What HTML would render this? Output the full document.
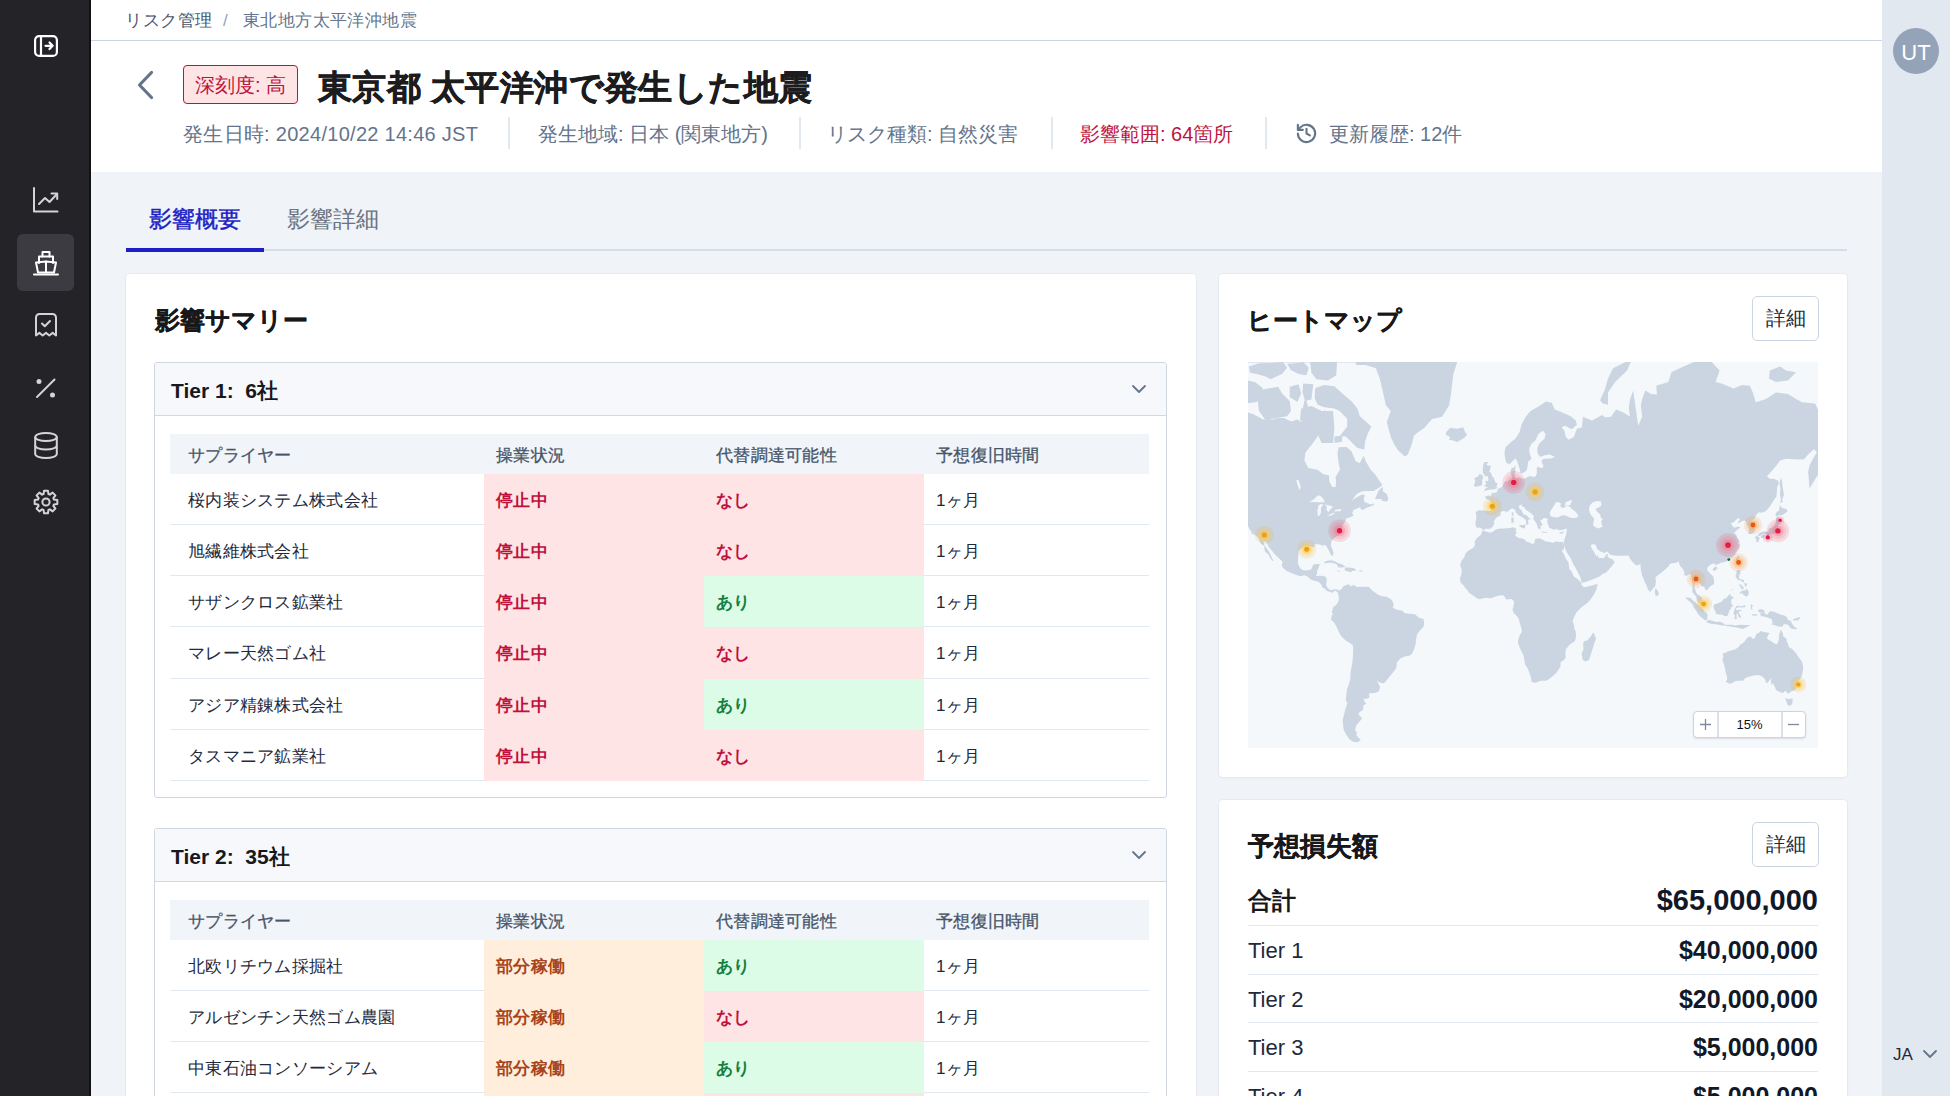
<!DOCTYPE html>
<html>
<head>
<meta charset="utf-8">
<title>リスク管理</title>
<style>
*{box-sizing:border-box;margin:0;padding:0}
html,body{width:1950px;height:1096px;overflow:hidden}
body{position:relative;background:#f0f3f8;font-family:"Liberation Sans",sans-serif;color:#1e293b}
.a{position:absolute;white-space:nowrap}
.b{-webkit-text-stroke:0.3px currentColor}
#side{left:0;top:0;width:91px;height:1096px;background:#242428;border-right:2px solid #121214}
#side svg{position:absolute;overflow:visible}
#hdr{left:91px;top:0;width:1791px;height:172px;background:#fff}
#bcline{left:91px;top:40px;width:1791px;height:1px;background:#cbd5e1}
#rail{left:1882px;top:0;width:68px;height:1096px;background:#e2e8f0}
.card{position:absolute;background:#fff;border-radius:4px;box-shadow:0 0 0 1px #e6ebf1,0 1px 3px rgba(15,23,42,.06)}
.tier{position:absolute;border:1.5px solid #cfd6df;border-radius:3px;background:#fff;overflow:hidden}
.th{position:absolute;left:0;top:0;right:0;background:#f6f8fc;border-bottom:1.8px solid #d2d8e0}
.tbl{position:absolute;left:15px}
.row{position:absolute;left:0;width:979px;height:51.3px}
.hrow{background:#f1f5f9;height:40px}
.c{position:absolute;top:0;height:100%;font-size:17px;letter-spacing:0.3px;line-height:54px}
.hrow .c{line-height:43px;color:#475569;-webkit-text-stroke:0.3px #475569}
.c1{left:0;width:314px;padding-left:18px;color:#1e293b;border-bottom:1px solid #e2e8f0}
.c2{left:314px;width:220px;padding-left:12px;font-weight:bold}
.c3{left:534px;width:220px;padding-left:12px;font-weight:bold}
.c4{left:754px;width:225px;padding-left:12px;color:#1e293b;border-bottom:1px solid #e2e8f0}
.hrow .c1,.hrow .c4{border-bottom:0}
.red{background:#ffe4e6;color:#be123c}
.grn{background:#dcfce7;color:#15803d}
.org{background:#ffeedb;color:#a8431a}
.btn{position:absolute;border:1.5px solid #cbd5e1;border-radius:5px;background:#fff;font-size:20px;line-height:42px;text-align:center;color:#1e293b}
.lrow{position:absolute;left:29px;width:570px;border-bottom:1.5px solid #e2e8f0}
.lrow .l{position:absolute;left:0;font-size:22px}
.lrow .r{position:absolute;right:0;font-size:25px;font-weight:bold;color:#111827}
</style>
</head>
<body>
<div id="side" class="a">
  <!-- panel toggle -->
  <svg style="left:34px;top:35px" width="24" height="22" viewBox="0 0 24 22" fill="none" stroke="#fff" stroke-width="2.2" stroke-linecap="round" stroke-linejoin="round">
    <rect x="1.1" y="1.1" width="21.8" height="19.8" rx="4"/><line x1="7" y1="1.5" x2="7" y2="20.5"/><path d="M11.5 10.8h7M15.5 7.5l3.2 3.3-3.2 3.3"/>
  </svg>
  <!-- chart -->
  <svg style="left:33px;top:187px" width="26" height="26" viewBox="0 0 26 26" fill="none" stroke="#d4d4d8" stroke-width="2" stroke-linecap="round" stroke-linejoin="round">
    <path d="M1 1v23.5h23.5"/><path d="M6 17l6-6 4.5 4L24 7"/><path d="M18.5 6.5H24.2v5.5"/>
  </svg>
  <div class="a" style="left:17px;top:234px;width:57px;height:57px;border-radius:6px;background:#3b3b41"></div>
  <!-- ship -->
  <svg style="left:33px;top:250px" width="26" height="26" viewBox="0 0 26 26" fill="none" stroke="#fff" stroke-width="2" stroke-linecap="round" stroke-linejoin="round">
    <path d="M9.5 6.5V2h7v4.5"/><path d="M6 13V6.5h14V13"/><path d="M3 12.5l10-1 10 1-2 10H5z"/><path d="M13 11.5v11"/><path d="M1 24.5h24"/>
  </svg>
  <!-- receipt check -->
  <svg style="left:35px;top:313px" width="22" height="25" viewBox="0 0 22 25" fill="none" stroke="#d4d4d8" stroke-width="2" stroke-linecap="round" stroke-linejoin="round">
    <path d="M1 22.5V4.5a3.5 3.5 0 0 1 3.5-3.5h13a3.5 3.5 0 0 1 3.5 3.5V22.5l-3.33-2.6-3.33 2.6-3.33-2.6-3.33 2.6-3.33-2.6-3.35 2.6z"/><path d="M7 10.5l2.8 2.8 5.2-5.3"/>
  </svg>
  <!-- percent -->
  <svg style="left:35px;top:377px" width="22" height="22" viewBox="0 0 22 22" fill="none" stroke="#d4d4d8" stroke-width="2" stroke-linecap="round">
    <path d="M2 20L19.5 2.5"/><circle cx="4" cy="4.5" r="1.5" fill="#d4d4d8"/><circle cx="17.5" cy="18" r="1.5" fill="#d4d4d8"/>
  </svg>
  <!-- database -->
  <svg style="left:34px;top:432px" width="24" height="27" viewBox="0 0 24 27" fill="none" stroke="#d4d4d8" stroke-width="2">
    <ellipse cx="12" cy="5" rx="10.8" ry="4"/><path d="M1.2 5v17c0 2.2 4.8 4 10.8 4s10.8-1.8 10.8-4V5"/><path d="M1.2 13.5c0 2.2 4.8 4 10.8 4s10.8-1.8 10.8-4"/>
  </svg>
  <!-- gear -->
  <svg style="left:31.5px;top:488px" width="28" height="28" viewBox="0 0 28 28" fill="none" stroke="#d4d4d8" stroke-width="2" stroke-linejoin="round">
    <path d="M21.93 11.55 L25.33 12.05 L25.33 15.95 L21.93 16.45 L21.34 17.87 L23.39 20.64 L20.64 23.39 L17.87 21.34 L16.45 21.93 L15.95 25.33 L12.05 25.33 L11.55 21.93 L10.13 21.34 L7.36 23.39 L4.61 20.64 L6.66 17.87 L6.07 16.45 L2.67 15.95 L2.67 12.05 L6.07 11.55 L6.66 10.13 L4.61 7.36 L7.36 4.61 L10.13 6.66 L11.55 6.07 L12.05 2.67 L15.95 2.67 L16.45 6.07 L17.87 6.66 L20.64 4.61 L23.39 7.36 L21.34 10.13Z"/><circle cx="14" cy="14" r="3.6"/>
  </svg>
</div>

<div id="hdr" class="a"></div>
<div id="bcline" class="a"></div>
<div class="a" style="left:125px;top:8px;font-size:17px;letter-spacing:0.6px;line-height:26px;color:#475569">リスク管理</div>
<div class="a" style="left:223px;top:8px;font-size:17px;line-height:26px;color:#94a3b8">/</div>
<div class="a" style="left:243px;top:8px;font-size:17px;letter-spacing:0.4px;line-height:26px;color:#64748b">東北地方太平洋沖地震</div>

<!-- back chevron -->
<svg class="a" style="left:136px;top:70px" width="20" height="30" viewBox="0 0 20 30" fill="none" stroke="#64748b" stroke-width="3.2" stroke-linecap="round" stroke-linejoin="round"><path d="M15.5 2.5L3.5 15l12 12.5"/></svg>
<div class="a" style="left:183px;top:65px;width:115px;height:39px;border:1.7px solid #b4163f;border-radius:4px;background:#ffe4e6;color:#be123c;font-size:20px;line-height:39px;text-align:center">深刻度: 高</div>
<div class="a" style="left:318px;top:63px;font-size:34px;line-height:48px;letter-spacing:0.4px;font-weight:bold;color:#1c1c1f;-webkit-text-stroke:0.6px #1c1c1f">東京都 太平洋沖で発生した地震</div>

<div class="a" style="left:183px;top:120px;font-size:20px;line-height:28px;letter-spacing:0.28px;color:#64748b">発生日時: 2024/10/22 14:46 JST</div>
<div class="a" style="left:508px;top:117px;width:2px;height:32px;background:#e2e8f0"></div>
<div class="a" style="left:538px;top:120px;font-size:20px;line-height:28px;color:#64748b">発生地域: 日本 (関東地方)</div>
<div class="a" style="left:799px;top:117px;width:2px;height:32px;background:#e2e8f0"></div>
<div class="a" style="left:827px;top:120px;font-size:20px;line-height:28px;color:#64748b">リスク種類: 自然災害</div>
<div class="a" style="left:1051px;top:117px;width:2px;height:32px;background:#e2e8f0"></div>
<div class="a" style="left:1080px;top:120px;font-size:20px;line-height:28px;color:#be123c">影響範囲: 64箇所</div>
<div class="a" style="left:1265px;top:117px;width:2px;height:32px;background:#e2e8f0"></div>
<svg class="a" style="left:1295px;top:122px" width="23" height="23" viewBox="0 0 24 24" fill="none" stroke="#64748b" stroke-width="2.2" stroke-linecap="round" stroke-linejoin="round"><path d="M3 12a9 9 0 1 0 2.6-6.4L3 8.2"/><path d="M3 3v5.2h5.2"/><path d="M12 7v5l3.5 2"/></svg>
<div class="a" style="left:1329px;top:120px;font-size:20px;line-height:28px;color:#64748b">更新履歴: 12件</div>

<div id="rail" class="a"></div>
<div class="a" style="left:1893px;top:28px;width:46px;height:46px;border-radius:50%;background:#94a3b8;color:#fff;font-size:22px;line-height:49px;text-align:center">UT</div>
<div class="a" style="left:1893px;top:1043px;font-size:17px;line-height:24px;color:#1e293b">JA</div>
<svg class="a" style="left:1922px;top:1049px" width="16" height="10" viewBox="0 0 16 10" fill="none" stroke="#64748b" stroke-width="1.8" stroke-linecap="round" stroke-linejoin="round"><path d="M2 2l6 6 6-6"/></svg>

<!-- tabs -->
<div class="a" style="left:149px;top:203px;font-size:23px;line-height:32px;color:#1d1fc4;-webkit-text-stroke:0.45px #1d1fc4">影響概要</div>
<div class="a" style="left:287px;top:203px;font-size:23px;line-height:32px;color:#6b7280">影響詳細</div>
<div class="a" style="left:126px;top:249px;width:1721px;height:2px;background:#d6dde6"></div>
<div class="a" style="left:126px;top:248px;width:138px;height:3.5px;background:#1b1fc8"></div>

<!-- left card -->
<div class="card" style="left:126px;top:274px;width:1070px;height:900px">
  <div class="a b" style="left:29px;top:27px;font-size:25px;line-height:38px;font-weight:bold;color:#18181b">影響サマリー</div>

  <div class="tier" style="left:28px;top:88px;width:1013px;height:436px">
    <div class="th" style="height:53px"></div>
    <div class="a" style="left:16px;top:13px;font-size:21px;line-height:30px;font-weight:bold;color:#18181b">Tier 1:&nbsp; 6社</div>
    <svg class="a" style="left:976px;top:21px" width="16" height="10" viewBox="0 0 16 10" fill="none" stroke="#64748b" stroke-width="1.8" stroke-linecap="round" stroke-linejoin="round"><path d="M2 2l6 6 6-6"/></svg>
    <div class="tbl" style="top:70.5px">
      <div class="row hrow" style="top:0"><div class="c c1">サプライヤー</div><div class="c c2" style="font-weight:normal">操業状況</div><div class="c c3" style="font-weight:normal">代替調達可能性</div><div class="c c4">予想復旧時間</div></div>
      <div class="row" style="top:40px"><div class="c c1">桜内装システム株式会社</div><div class="c c2 red">停止中</div><div class="c c3 red">なし</div><div class="c c4">1ヶ月</div></div>
      <div class="row" style="top:91.3px"><div class="c c1">旭繊維株式会社</div><div class="c c2 red">停止中</div><div class="c c3 red">なし</div><div class="c c4">1ヶ月</div></div>
      <div class="row" style="top:142.6px"><div class="c c1">サザンクロス鉱業社</div><div class="c c2 red">停止中</div><div class="c c3 grn">あり</div><div class="c c4">1ヶ月</div></div>
      <div class="row" style="top:193.9px"><div class="c c1">マレー天然ゴム社</div><div class="c c2 red">停止中</div><div class="c c3 red">なし</div><div class="c c4">1ヶ月</div></div>
      <div class="row" style="top:245.2px"><div class="c c1">アジア精錬株式会社</div><div class="c c2 red">停止中</div><div class="c c3 grn">あり</div><div class="c c4">1ヶ月</div></div>
      <div class="row" style="top:296.5px"><div class="c c1">タスマニア鉱業社</div><div class="c c2 red">停止中</div><div class="c c3 red">なし</div><div class="c c4">1ヶ月</div></div>
    </div>
  </div>

  <div class="tier" style="left:28px;top:554px;width:1013px;height:500px">
    <div class="th" style="height:53px"></div>
    <div class="a" style="left:16px;top:13px;font-size:21px;line-height:30px;font-weight:bold;color:#18181b">Tier 2:&nbsp; 35社</div>
    <svg class="a" style="left:976px;top:21px" width="16" height="10" viewBox="0 0 16 10" fill="none" stroke="#64748b" stroke-width="1.8" stroke-linecap="round" stroke-linejoin="round"><path d="M2 2l6 6 6-6"/></svg>
    <div class="tbl" style="top:70.5px">
      <div class="row hrow" style="top:0"><div class="c c1">サプライヤー</div><div class="c c2" style="font-weight:normal">操業状況</div><div class="c c3" style="font-weight:normal">代替調達可能性</div><div class="c c4">予想復旧時間</div></div>
      <div class="row" style="top:40px"><div class="c c1">北欧リチウム採掘社</div><div class="c c2 org">部分稼働</div><div class="c c3 grn">あり</div><div class="c c4">1ヶ月</div></div>
      <div class="row" style="top:91.3px"><div class="c c1">アルゼンチン天然ゴム農園</div><div class="c c2 org">部分稼働</div><div class="c c3 red">なし</div><div class="c c4">1ヶ月</div></div>
      <div class="row" style="top:142.6px"><div class="c c1">中東石油コンソーシアム</div><div class="c c2 org">部分稼働</div><div class="c c3 grn">あり</div><div class="c c4">1ヶ月</div></div>
      <div class="row" style="top:193.9px"><div class="c c1">&nbsp;</div><div class="c c2 org"></div><div class="c c3 red"></div><div class="c c4"></div></div>
    </div>
  </div>
</div>

<!-- heatmap card -->
<div class="card" style="left:1219px;top:274px;width:628px;height:503px">
  <div class="a b" style="left:28px;top:27px;font-size:25px;line-height:38px;font-weight:bold;color:#18181b">ヒートマップ</div>
  <div class="btn" style="left:533px;top:22px;width:67px;height:45px">詳細</div>
</div>
<svg class="a" style="left:1248px;top:362px" width="570" height="386" viewBox="0 0 570 386">
  <defs>
    <radialGradient id="gr"><stop offset="0" stop-color="#f43f5e" stop-opacity=".55"/><stop offset=".35" stop-color="#fb7185" stop-opacity=".35"/><stop offset=".7" stop-color="#fda4af" stop-opacity=".25"/><stop offset="1" stop-color="#fda4af" stop-opacity="0"/></radialGradient>
    <radialGradient id="go"><stop offset="0" stop-color="#f97316" stop-opacity=".6"/><stop offset=".4" stop-color="#fb923c" stop-opacity=".3"/><stop offset=".75" stop-color="#fdba74" stop-opacity=".2"/><stop offset="1" stop-color="#fdba74" stop-opacity="0"/></radialGradient>
    <radialGradient id="gy"><stop offset="0" stop-color="#f59e0b" stop-opacity=".6"/><stop offset=".4" stop-color="#fbbf24" stop-opacity=".3"/><stop offset=".75" stop-color="#fde68a" stop-opacity=".25"/><stop offset="1" stop-color="#fde68a" stop-opacity="0"/></radialGradient>
  </defs>
  <rect width="570" height="386" fill="#f5f8fb"/>
  <path d="M-91.4,69.7 -87.4,55.9 -79.4,46.2 -68.3,38.3 -59.3,41.4 -45.2,45.7 -37.2,48.0 -29.1,52.0 -22.1,48.6 -13.0,46.2 -5.0,49.1 5.1,52.0 15.1,57.5 25.2,57.5 33.2,54.8 43.3,59.6 49.3,57.5 53.3,60.1 54.3,49.1 57.4,33.9 60.4,46.2 65.4,54.8 73.5,57.5 76.5,47.4 81.5,57.5 80.5,65.3 72.4,65.3 69.4,75.0 64.4,81.8 57.4,90.4 56.4,98.4 60.4,106.0 69.4,107.8 75.5,112.2 80.9,113.2 81.5,120.1 84.5,125.0 87.5,125.0 88.1,120.1 87.5,114.9 92.0,107.8 90.5,100.4 89.5,91.2 90.5,85.3 98.6,84.9 103.6,89.5 106.6,96.5 107.6,99.2 111.7,101.1 115.7,93.7 117.7,99.2 122.7,107.8 127.8,113.2 131.2,118.4 134.4,122.7 131.8,125.3 125.7,129.1 117.7,129.1 112.7,129.7 108.6,132.2 103.6,138.9 107.6,135.9 113.7,132.5 117.1,133.2 115.7,136.5 116.5,140.0 122.7,142.4 125.7,141.5 126.1,142.4 123.7,144.1 118.7,145.8 114.1,148.3 111.7,145.2 105.6,148.0 104.2,151.3 105.6,153.8 102.6,154.9 98.0,156.7 97.4,159.6 95.6,161.4 93.6,166.0 94.6,170.2 91.6,172.2 87.5,175.1 83.5,178.9 82.7,182.9 84.5,187.5 85.5,190.9 84.7,193.8 83.1,193.4 81.9,190.7 79.9,186.8 77.5,182.9 74.5,183.4 70.4,182.2 66.4,182.4 66.8,185.2 63.4,184.8 58.4,183.6 55.4,184.8 50.7,188.6 50.3,193.1 49.9,200.8 50.9,204.1 53.3,207.3 55.8,208.5 61.4,208.1 63.4,207.3 64.6,204.1 65.4,202.6 69.4,201.9 71.8,202.1 70.4,206.2 69.2,208.5 68.8,212.6 68.0,214.0 73.5,213.8 77.5,214.6 78.9,217.1 78.1,222.9 79.5,226.0 82.5,228.2 85.5,227.4 88.5,227.2 90.9,228.6 91.6,229.5 90.5,231.1 88.9,229.7 86.5,228.4 84.9,230.9 82.5,230.1 79.5,229.2 76.5,226.6 73.9,225.0 74.1,223.5 70.8,220.0 67.4,219.0 63.4,218.0 59.4,214.6 56.4,213.2 52.3,214.2 48.3,213.0 43.3,211.1 38.3,208.8 34.6,205.6 33.8,203.0 34.6,199.7 32.2,197.6 28.2,193.8 26.4,192.0 23.8,188.6 20.8,185.2 18.8,180.6 15.5,178.9 16.1,182.9 18.2,185.7 20.2,188.6 22.2,192.0 23.8,195.4 25.4,198.7 24.6,198.9 21.8,195.4 20.8,193.1 17.1,189.8 16.5,187.5 16.1,184.1 13.1,181.7 11.7,178.9 10.7,176.5 8.5,173.9 6.1,172.4 3.9,172.0 3.1,169.3 1.3,167.0 0.1,164.0 -1.0,162.7 -2.6,158.8 -3.8,157.0 -3.2,153.5 -4.0,150.2 -2.8,141.2 -4.4,134.7 -1.0,133.2 -5.0,128.8 -10.0,126.6 -15.0,115.6 -18.0,111.4 -23.1,104.2 -28.1,100.4 -34.1,95.3 -41.2,94.5 -49.2,91.2 -56.3,96.1 -58.3,90.4 -61.3,97.6 -67.3,103.8 -73.3,109.7 -80.4,113.2 -71.3,100.4 -79.4,94.9 -85.4,88.3 -84.4,81.8 -77.4,75.0 -86.4,75.0ZM90.7,228.8 93.6,227.0 94.6,224.8 97.2,223.5 101.0,222.1 102.4,224.4 105.6,222.9 109.2,225.0 113.7,224.8 117.7,224.8 120.7,224.8 123.7,228.0 125.7,229.5 129.8,232.5 133.8,234.3 137.8,234.5 141.8,236.5 143.8,238.1 145.9,242.6 144.8,245.6 148.9,247.8 153.9,248.4 156.9,251.2 161.9,251.8 167.0,252.2 171.0,255.7 175.4,256.9 176.2,261.3 175.6,264.8 172.0,268.5 169.0,272.6 168.0,277.8 167.6,282.4 166.4,286.2 164.2,291.4 161.9,293.5 156.9,294.4 152.9,295.9 148.9,300.2 148.3,306.0 144.8,310.7 141.2,314.9 138.8,318.3 136.0,321.2 132.8,320.9 129.0,319.0 131.4,323.4 132.2,325.4 130.6,329.4 126.7,331.0 121.1,331.2 121.3,335.7 118.1,337.0 115.5,336.7 117.1,340.8 118.5,341.6 115.3,343.5 115.1,347.8 111.1,350.6 110.5,352.4 114.3,356.2 110.7,360.5 108.0,363.9 107.2,368.4 108.8,370.4 108.4,373.4 112.7,378.1 109.7,380.2 105.6,379.9 101.6,377.5 97.6,371.7 95.6,367.4 94.6,358.0 96.2,352.1 97.6,346.3 99.6,340.8 97.8,338.9 98.4,332.8 99.0,326.9 101.0,321.9 102.4,316.6 102.6,309.5 103.8,303.8 104.6,298.2 105.2,289.4 105.0,283.6 102.6,281.5 97.6,278.4 93.2,274.2 90.9,270.1 87.9,263.6 85.7,259.9 83.1,258.1 83.7,253.2 85.1,252.2 83.7,250.2 84.7,247.2 85.5,244.4 87.7,243.4 89.7,240.8 90.9,238.1 90.5,233.1 89.7,231.7ZM99.6,-18.3 109.7,-40.4 121.7,-57.5 145.9,-66.3 166.0,-80.8 186.1,-86.1 202.2,-67.8 222.3,-54.7 212.2,-34.5 208.2,-13.4 209.2,0.3 205.2,12.6 203.2,30.6 201.2,43.3 194.1,54.8 184.1,56.9 176.0,66.3 170.0,70.2 166.0,73.6 163.9,81.8 159.9,92.4 156.9,94.5 149.9,88.3 145.9,81.8 142.8,75.0 140.8,67.8 138.8,60.1 142.8,49.1 137.8,43.3 135.8,33.9 131.8,16.4 127.8,6.2 117.7,2.9 108.6,2.9 103.6,-6.8ZM126.9,137.1 128.8,132.8 130.8,128.2 134.8,124.7 134.8,129.1 138.8,132.2 140.4,137.1 138.8,139.7 134.8,138.9 132.8,137.1ZM-11.8,127.2 -5.0,129.7 -1.6,134.7 -5.0,133.5 -10.0,129.7ZM75.7,201.0 77.5,199.3 81.5,198.2 85.5,198.7 90.5,201.3 94.6,202.6 97.4,204.7 94.6,205.4 90.5,205.4 88.5,201.9 83.5,200.8 80.5,200.8 77.5,201.3ZM96.8,205.4 100.6,205.4 105.6,206.0 108.8,208.3 104.6,209.0 102.6,210.2 96.8,208.5ZM88.9,208.5 93.0,209.0 92.0,209.6 89.1,209.2ZM111.3,208.3 114.5,208.5 114.5,209.4 111.3,209.4ZM227.7,150.2 228.5,155.7 227.3,161.4 228.7,166.0 231.3,165.5 233.7,166.5 235.1,168.5 237.4,166.8 242.2,166.8 244.8,164.5 246.4,161.4 245.8,159.6 248.2,155.7 252.8,153.2 252.6,150.0 255.4,149.1 259.5,150.0 261.5,148.0 264.1,146.3 266.9,147.7 268.5,151.6 271.1,153.8 274.2,155.1 277.8,158.0 278.2,161.2 278.6,163.5 280.8,161.2 279.8,159.3 281.0,157.0 283.6,157.8 280.6,155.4 278.6,153.2 275.6,152.4 273.7,148.6 271.1,146.1 271.1,143.5 274.0,142.6 273.7,144.4 276.4,145.2 277.8,147.7 281.6,150.2 285.6,153.5 285.4,157.5 287.0,159.3 288.8,162.2 290.0,166.3 291.6,167.5 293.1,166.0 292.3,164.0 294.7,163.0 291.8,157.5 293.7,158.3 295.5,155.9 298.7,156.2 299.9,157.2 299.1,159.6 300.3,162.7 301.3,166.0 303.3,166.5 306.1,168.0 307.9,166.8 311.8,168.3 314.8,167.8 318.8,166.5 318.6,169.7 317.8,173.4 316.8,176.3 315.8,179.4 316.6,184.1 317.8,188.6 319.8,192.0 322.8,196.5 325.2,201.9 327.8,206.2 329.9,210.4 332.1,214.6 333.3,219.4 333.9,220.7 336.9,220.2 343.9,217.8 351.4,214.4 355.0,211.7 358.0,210.4 360.6,208.1 362.6,205.6 364.0,204.1 366.7,200.0 364.4,197.3 361.0,196.0 359.8,194.7 359.8,191.3 358.0,193.1 356.0,196.0 352.0,196.0 350.2,195.4 350.0,192.5 348.6,194.7 347.2,192.2 345.9,189.8 343.7,186.4 342.7,183.1 344.7,182.2 347.4,182.4 349.6,187.5 353.0,189.8 356.6,190.9 359.6,189.5 361.8,192.5 366.1,193.4 370.3,193.8 376.1,193.8 380.5,193.4 382.1,196.7 384.8,200.2 388.2,203.4 392.4,202.3 392.8,207.3 394.0,213.6 395.4,216.3 396.8,220.2 398.8,223.9 400.2,228.0 402.3,229.9 403.7,228.2 405.9,225.4 407.1,224.4 407.9,219.8 407.5,215.3 410.3,213.0 412.3,211.5 415.7,208.8 419.3,205.4 421.4,203.6 421.4,201.9 424.4,201.3 427.4,201.0 430.8,199.5 431.4,202.6 432.2,203.9 434.4,206.4 436.0,209.0 436.4,213.2 438.5,214.0 441.5,211.7 442.9,212.6 443.9,218.0 444.7,221.9 444.5,227.0 444.1,229.7 445.9,232.1 448.1,234.5 448.7,237.1 450.1,240.6 452.5,242.4 454.5,243.6 455.9,243.4 454.3,239.2 454.1,236.1 451.9,233.7 449.5,232.3 448.1,230.5 447.3,227.4 445.9,225.4 446.9,222.3 447.7,219.0 449.3,219.4 449.5,220.7 452.5,221.5 453.5,223.9 456.5,225.2 457.6,228.6 460.0,227.2 461.2,225.2 463.6,223.3 466.0,222.3 466.2,218.8 465.4,215.1 464.0,213.2 461.6,211.1 459.2,207.9 459.4,205.8 460.8,204.1 463.6,201.9 466.8,201.5 468.0,204.5 468.6,202.6 471.0,201.7 473.6,200.4 476.1,200.2 479.3,199.1 481.7,197.6 484.7,195.1 486.9,192.7 487.7,190.7 489.7,187.5 491.5,185.2 491.5,181.5 489.7,181.5 491.5,178.9 489.5,176.8 488.3,172.7 486.1,171.0 488.5,168.5 490.7,166.5 492.7,165.5 489.7,164.5 486.7,165.8 485.3,164.7 483.7,163.0 482.9,160.9 485.5,160.4 487.7,158.3 489.7,156.2 492.1,157.0 490.5,159.6 490.1,161.4 492.1,160.4 493.8,159.3 496.4,158.6 498.2,159.6 498.4,161.9 500.2,164.2 501.0,166.0 500.6,169.7 500.4,172.0 502.8,172.0 504.8,171.0 506.4,170.2 506.8,167.3 506.2,164.7 504.6,162.2 503.0,159.6 504.8,157.8 507.2,155.9 507.4,154.0 509.0,151.9 510.8,150.2 513.9,150.8 517.9,148.9 521.9,144.6 524.5,140.3 525.9,138.0 528.5,134.4 528.9,129.7 529.1,125.0 530.8,121.7 530.4,119.0 525.9,116.7 522.3,117.0 518.9,114.6 521.9,111.1 524.9,107.8 528.9,103.0 532.0,98.4 538.0,96.8 545.0,97.2 551.1,97.6 556.1,97.2 560.1,92.4 566.1,87.0 568.8,90.4 565.1,96.5 561.7,103.0 560.1,109.7 560.9,118.4 561.5,126.6 565.1,120.4 568.2,115.6 572.2,109.7 574.6,103.4 573.2,100.4 577.2,95.3 581.2,93.7 589.3,94.5 595.3,88.3 602.3,84.0 606.4,82.7 608.4,72.6 608.4,53.1 600.3,47.4 588.3,45.7 582.2,48.6 570.2,48.6 567.2,41.4 554.1,40.2 548.1,37.1 540.0,31.9 527.9,30.6 517.9,37.1 507.8,40.2 504.8,30.6 501.8,23.7 493.8,23.0 485.7,26.5 473.6,21.6 467.6,20.1 471.6,8.6 461.6,-2.3 456.5,-10.5 445.5,0.3 435.4,4.5 423.4,10.2 420.4,20.1 408.3,23.7 408.9,32.6 403.3,31.9 397.2,28.6 394.2,37.1 392.8,43.3 394.2,54.8 390.2,63.8 385.2,28.6 382.1,37.1 380.7,46.2 382.1,54.8 375.1,50.3 368.1,47.4 363.0,54.8 357.0,55.3 354.0,53.1 343.9,58.5 334.9,54.8 333.9,65.3 328.9,66.8 325.8,75.0 320.8,77.8 317.8,75.0 316.4,68.8 313.8,65.3 316.8,63.8 323.8,67.3 328.9,62.7 327.8,58.5 322.8,54.2 312.8,49.7 306.7,47.4 303.7,40.8 298.1,39.6 289.6,45.1 282.6,49.1 277.6,54.8 273.5,62.7 271.5,70.2 267.5,76.4 262.5,80.5 257.5,85.3 256.5,90.4 257.1,96.5 258.5,101.1 261.5,102.3 264.5,99.2 267.5,96.5 268.9,98.4 270.1,102.3 271.9,107.8 272.5,111.4 275.2,111.1 278.6,108.6 279.6,104.2 280.2,99.6 283.6,96.8 281.6,91.2 281.2,86.2 283.6,81.8 287.6,78.2 290.6,71.7 295.1,68.8 297.7,72.6 296.3,76.8 291.2,81.8 289.2,86.2 289.6,91.2 292.3,94.9 296.7,93.2 301.7,92.4 307.1,94.9 302.7,96.5 295.7,96.8 293.5,98.4 293.9,101.1 295.3,103.0 295.1,105.6 292.7,106.0 289.6,104.5 288.6,106.7 289.0,110.7 287.6,114.3 285.6,115.3 283.6,114.3 280.6,114.6 277.6,116.0 275.0,117.0 271.5,115.3 268.5,116.7 266.9,115.3 266.5,113.2 267.5,109.7 267.1,107.1 267.7,103.4 265.5,105.6 262.9,106.7 262.7,111.4 263.7,113.6 264.3,116.7 262.5,118.0 260.3,118.7 256.5,119.7 255.7,122.0 254.0,124.7 251.4,126.3 249.6,126.9 249.4,129.4 246.8,131.0 243.8,130.7 243.2,133.8 240.4,133.5 236.9,134.4 237.8,136.5 241.4,138.0 244.0,141.2 244.0,144.6 243.4,148.9 240.4,149.1 235.3,148.6 230.3,148.3ZM234.5,169.0 235.7,168.8 242.0,170.7 244.4,170.0 248.4,167.3 252.4,166.5 256.5,166.5 261.5,166.0 266.1,165.3 267.1,166.5 268.5,166.0 267.7,169.0 268.7,170.5 266.9,172.9 268.3,174.6 270.5,176.1 273.5,176.3 277.0,177.5 278.0,179.4 281.6,180.6 284.6,182.2 286.6,180.6 286.6,177.7 289.6,176.3 292.7,176.8 295.7,178.2 297.1,179.2 301.7,180.1 304.7,180.8 307.7,179.4 311.4,179.9 315.2,179.9 316.6,184.1 315.4,188.0 314.0,187.7 314.4,189.8 315.8,192.0 317.8,196.5 320.6,200.8 321.4,207.3 323.8,209.4 325.4,213.8 326.8,215.3 329.3,216.7 331.9,219.2 333.5,221.1 333.3,222.7 335.9,225.2 339.9,224.6 343.9,223.5 348.0,222.3 349.6,222.3 349.0,225.0 348.2,228.0 345.9,232.5 342.9,237.1 339.9,240.6 334.9,244.2 330.9,247.8 328.4,250.6 326.2,254.9 324.6,259.3 325.8,262.3 326.4,266.8 327.8,269.5 328.0,275.1 326.8,279.2 321.8,282.6 317.8,287.3 317.4,292.2 317.8,295.5 315.8,298.2 312.6,300.2 312.4,304.9 310.8,307.2 308.3,310.9 305.7,313.2 301.7,316.8 298.1,318.7 292.7,318.7 289.6,320.0 286.6,320.9 283.4,319.7 283.2,317.0 282.2,313.0 279.6,306.3 277.0,302.6 275.6,293.5 273.1,289.0 270.1,281.5 270.1,278.4 271.5,273.6 274.0,269.5 272.9,264.4 271.1,258.5 270.5,256.3 268.7,254.0 265.7,251.0 264.5,247.8 265.5,244.2 266.1,240.2 265.3,238.4 263.5,237.1 260.5,237.3 258.3,237.5 255.7,233.5 252.4,233.3 249.4,233.9 246.4,234.9 242.4,236.5 238.4,235.7 234.3,236.5 231.3,237.3 228.3,236.1 224.3,233.1 221.3,231.1 219.7,228.8 217.0,225.6 215.2,222.9 212.8,221.1 211.8,216.5 213.2,213.2 213.8,208.3 213.2,206.0 212.0,203.0 213.8,198.2 216.2,195.4 217.4,191.6 220.3,188.4 223.3,187.1 226.3,184.8 226.9,181.7 226.7,179.4 229.3,175.4 232.7,173.2 233.7,170.5ZM345.5,270.5 347.0,273.6 348.0,277.3 346.5,280.5 345.5,284.1 343.9,289.0 342.1,294.8 340.9,298.2 337.3,299.5 334.9,297.9 334.1,294.8 333.5,291.6 335.5,287.3 335.1,282.0 335.9,279.2 338.9,278.4 340.9,276.7 342.9,274.2 344.5,271.5ZM407.1,226.4 408.3,226.8 409.9,229.0 410.9,231.5 410.5,233.1 408.5,234.3 407.3,233.5 406.9,230.5ZM234.9,129.4 238.0,128.5 242.4,127.5 246.8,127.2 249.2,125.9 248.4,124.0 249.8,121.4 247.4,120.4 246.8,118.4 245.4,115.3 244.0,114.3 243.2,111.1 241.4,109.7 242.4,106.0 242.8,103.8 240.0,103.4 238.4,102.6 240.4,100.0 236.3,100.0 235.1,103.8 234.7,107.8 235.3,111.8 236.9,113.2 236.3,114.3 239.6,113.9 240.4,117.0 240.2,119.0 237.4,119.0 238.0,122.4 235.9,124.0 237.8,124.7 240.4,125.3 238.0,125.9 236.3,128.2ZM234.3,122.7 234.1,118.4 235.3,114.9 233.9,112.5 231.3,112.2 229.3,114.9 226.3,116.0 227.3,119.4 225.9,123.4 227.3,125.0 230.3,124.3 233.3,123.4ZM198.1,70.2 202.2,65.8 209.2,66.8 215.2,65.3 217.2,70.2 219.3,72.6 216.2,75.9 209.2,80.0 204.2,78.2 200.8,77.8 202.2,75.0 198.1,73.1ZM271.3,163.2 273.5,163.0 277.8,162.7 276.8,166.0 275.2,166.5 271.5,164.5ZM263.1,155.7 265.9,155.4 265.7,160.6 263.5,161.2 263.3,157.5ZM263.7,150.5 265.5,150.2 265.5,153.0 264.7,154.6 263.7,153.2ZM293.7,169.5 299.3,170.2 298.9,171.0 293.7,170.5ZM311.4,170.7 316.0,169.3 314.8,171.2 312.0,172.0ZM268.5,-21.4 278.6,-33.4 290.6,-34.5 300.7,-36.8 294.7,-13.4 284.6,-4.1 279.6,-0.6 274.6,-8.6 269.5,-15.3ZM352.0,38.3 357.0,27.2 360.0,16.4 365.0,6.2 375.1,1.2 384.2,-3.2 379.1,8.6 367.1,20.1 360.0,30.6 360.0,42.7 354.6,41.4ZM521.9,8.6 532.0,4.5 538.0,8.6 548.1,10.2 540.0,18.6 527.9,20.1 520.9,16.4ZM437.4,-23.5 447.5,-13.4 457.6,-18.3 455.5,-34.5 441.5,-40.4ZM531.8,141.8 533.0,137.4 532.0,132.8 532.4,126.6 531.4,121.7 533.0,115.6 534.0,118.4 534.6,125.0 536.0,132.8 534.0,137.4 535.0,140.3 533.4,140.0ZM527.9,154.6 530.4,153.5 534.4,153.0 539.6,149.4 538.4,146.9 534.6,146.3 531.8,143.2 531.0,148.9 528.7,149.7 527.9,151.6 527.5,154.0ZM509.6,173.4 510.8,171.7 513.9,169.7 516.9,169.5 519.9,169.3 521.5,165.8 522.5,166.5 524.9,165.0 526.9,162.7 527.9,158.8 527.7,156.7 529.1,155.1 530.8,154.6 531.0,157.0 532.0,159.6 531.0,162.7 530.0,164.0 529.7,166.3 529.1,169.0 528.7,170.7 527.5,170.2 527.3,171.2 525.5,171.7 524.3,172.0 521.9,172.0 521.5,172.7 519.5,174.6 518.1,172.7 518.3,171.7 515.9,172.0 513.9,172.7 511.9,173.9 509.8,173.7ZM507.0,174.9 508.8,173.7 510.2,174.4 511.7,175.8 510.6,179.6 509.0,180.6 508.2,179.6 508.4,176.8 507.2,176.5ZM512.7,175.1 513.3,173.7 515.1,172.7 517.1,172.9 517.1,173.9 516.3,175.4 513.9,176.3ZM489.7,193.8 491.5,194.2 490.7,197.6 489.5,200.8 488.1,199.1 487.9,196.9 489.1,195.1ZM464.8,206.8 466.8,205.1 468.8,204.9 469.6,206.0 468.0,208.1 466.6,209.0 465.0,208.3ZM488.9,208.3 490.7,208.1 492.1,208.3 492.5,211.5 490.9,213.8 491.3,216.7 492.7,217.6 495.8,218.0 496.2,220.7 494.4,219.8 492.7,218.6 490.7,218.2 488.9,217.1 488.7,215.9 487.3,214.0 488.3,212.6 488.5,209.8ZM491.7,232.1 492.3,230.1 494.8,228.6 497.4,228.2 498.8,226.4 500.6,229.5 500.8,232.1 498.8,234.7 496.2,233.5 493.8,231.1ZM496.4,220.9 499.2,221.5 498.2,225.0 496.6,223.5ZM491.5,222.1 493.8,222.9 492.3,225.0 491.5,224.6ZM492.7,224.4 494.8,224.1 495.8,226.0 494.2,227.8 492.7,226.2ZM482.1,229.2 486.3,225.4 487.1,223.3 486.7,225.0 483.3,229.0ZM465.6,243.2 466.8,242.2 470.0,241.2 473.6,239.8 475.7,236.9 478.5,235.9 480.7,233.1 482.1,232.1 483.1,233.9 484.7,235.1 486.1,235.7 483.7,237.1 483.1,240.2 483.9,242.4 485.7,244.4 483.5,244.6 482.7,247.2 481.3,248.6 480.7,251.0 479.7,253.8 477.3,254.3 473.6,252.6 471.0,252.6 468.0,252.0 467.6,249.6 466.2,247.6 465.6,245.2ZM438.0,234.9 440.5,235.7 442.5,235.7 444.5,238.1 447.1,240.2 448.7,242.0 450.7,242.8 453.5,245.2 455.1,247.2 456.5,249.8 458.8,251.0 459.6,252.8 459.2,257.9 456.8,258.1 454.1,255.9 452.1,254.3 449.5,251.2 447.9,248.2 445.9,245.8 444.7,242.8 442.7,240.6 440.3,238.6 438.2,236.5ZM458.0,259.9 459.6,258.3 462.2,258.1 464.6,259.1 468.6,260.1 470.6,259.5 472.8,260.1 475.7,261.5 476.9,262.3 476.5,263.8 471.6,262.9 467.6,262.3 463.6,261.9 460.4,260.9 458.6,260.1ZM477.1,262.7 483.7,262.7 486.7,263.4 492.7,262.7 497.8,262.9 502.4,263.2 497.8,265.4 494.8,267.0 488.7,265.4 482.7,264.4 477.7,264.0ZM486.7,257.3 486.9,253.2 485.3,251.8 486.3,248.2 487.3,245.8 489.3,243.6 492.7,244.2 496.4,243.4 498.0,243.0 496.8,245.2 493.8,245.4 490.7,245.2 487.9,246.2 488.7,248.2 491.1,248.0 494.4,248.0 491.7,249.4 490.3,250.0 492.3,253.2 493.4,255.5 490.7,255.5 489.7,251.6 488.5,252.0 488.7,257.3ZM502.8,242.2 504.8,243.2 503.8,246.2 505.4,247.8 502.8,247.2ZM503.8,252.2 509.4,252.2 508.8,253.8 504.2,253.4ZM509.8,248.8 511.9,247.0 515.9,248.0 516.7,251.2 518.9,253.0 521.9,249.2 524.9,249.6 528.9,251.0 532.0,252.2 537.0,253.8 539.6,256.1 539.6,257.9 543.0,258.7 543.6,261.3 546.4,264.8 549.7,267.0 547.6,267.2 543.0,266.6 540.0,262.7 536.0,261.9 534.6,264.4 532.0,264.8 530.0,264.6 525.9,262.7 523.9,263.2 524.5,260.3 523.5,256.9 517.9,255.1 514.9,254.3 513.5,254.5 511.7,251.8 514.9,251.0 512.9,250.8 510.2,249.8ZM544.6,257.3 548.1,256.3 551.1,254.9 552.5,255.9 550.1,258.3 546.0,258.7ZM474.6,291.6 475.3,294.8 474.4,298.2 475.7,301.5 476.9,306.0 477.7,310.7 479.1,314.2 479.1,317.8 477.7,319.7 480.7,321.4 483.7,321.4 487.5,319.0 491.7,318.7 495.2,318.7 496.8,316.6 499.8,314.9 505.8,313.5 510.2,313.0 513.9,314.2 516.5,316.6 517.9,320.2 519.3,321.2 520.9,319.0 523.5,316.1 522.9,319.5 523.5,322.9 524.9,320.9 526.9,325.1 527.9,327.7 531.0,329.7 535.0,331.0 537.4,328.7 538.6,330.2 540.6,331.8 543.0,329.4 547.4,327.7 548.3,324.6 549.7,320.9 550.7,318.5 553.1,315.4 554.3,311.8 555.3,305.6 554.3,300.4 553.1,298.2 550.1,294.8 549.1,292.7 546.6,289.4 544.4,287.3 541.0,285.1 540.0,282.0 538.8,279.4 538.6,276.7 536.6,275.3 535.2,274.2 535.0,271.5 533.0,267.8 532.0,269.5 531.2,272.6 531.0,276.7 530.0,280.5 528.9,282.2 526.5,281.5 523.3,279.2 520.3,277.8 518.9,275.9 519.9,273.6 521.5,270.9 518.9,270.5 514.9,269.7 512.5,269.1 510.8,270.9 508.4,271.7 507.4,274.2 506.8,276.5 504.2,276.5 502.8,274.6 500.2,275.1 498.2,277.3 496.6,279.4 494.8,281.3 492.3,282.6 490.7,285.1 487.3,287.3 484.7,287.9 482.1,288.8 479.7,289.4 476.9,291.1ZM537.2,336.0 540.0,337.0 544.6,336.5 544.6,340.0 543.6,342.7 541.6,343.8 539.6,343.0 538.4,339.4ZM0.8,4.4 11.0,1.2 35.3,0.6 39.1,5.7 34.0,12.0 22.5,17.2 17.4,14.6 8.5,12.0 2.1,10.8ZM39.1,1.8 55.7,0.6 60.9,5.7 58.3,13.3 50.6,12.0 43.0,8.2ZM62.1,0.6 89.0,0.6 88.3,13.3 80.0,18.4 68.5,17.2 63.4,10.8ZM-0.4,-2.0 108.1,-2.0 106.8,0.6 -0.4,0.6ZM-0.4,18.4 7.2,20.3 14.9,26.1 13.6,33.8 8.5,40.1 -0.4,41.4ZM9.1,35.0 14.9,27.4 30.2,24.8 34.0,31.2 41.7,38.9 43.0,49.1 39.1,54.2 28.9,56.1 17.4,58.0 11.0,49.1ZM41.7,24.8 50.6,22.3 53.2,31.2 49.4,40.1 41.7,35.0ZM55.1,21.6 65.3,22.3 63.4,37.6 57.0,38.9 54.5,29.9ZM53.2,46.5 63.4,44.0 73.6,49.1 76.2,64.4 68.5,69.5 57.0,61.9 51.9,58.0ZM67.2,26.1 76.2,22.9 86.4,24.2 94.1,31.2 104.3,40.1 109.4,46.5 111.9,54.2 123.4,64.4 119.6,72.1 117.1,79.7 116.4,87.4 109.4,86.1 103.0,79.7 97.9,74.6 91.5,74.6 99.2,64.4 99.2,56.7 91.5,49.1 86.4,46.5 76.2,45.3 69.8,42.7 66.6,36.3ZM73.6,49.1 85.1,49.1 86.4,67.0 85.1,81.0 73.6,81.0 68.5,69.5ZM86.4,74.6 94.1,73.4 94.1,79.7 86.4,81.0Z" fill="#cbd5e1"/>
  <path d="M302.7,154.0 301.7,151.6 302.7,148.6 304.1,146.6 305.9,143.8 307.7,140.6 310.3,140.0 313.2,141.8 312.0,143.5 314.0,146.1 315.8,145.8 317.8,144.6 319.8,143.8 322.0,144.9 323.8,146.9 326.8,149.1 330.1,153.0 329.9,154.9 326.8,155.9 322.8,155.9 318.8,154.0 314.8,153.0 309.7,155.4 304.7,155.1ZM316.8,143.8 317.8,140.3 321.8,138.6 324.8,138.3 323.2,140.3 322.2,142.9 320.0,143.5ZM340.9,147.5 341.9,143.2 344.9,140.3 349.0,138.9 353.0,139.4 353.4,143.8 349.6,146.1 347.6,146.6 349.0,149.7 352.2,152.4 352.8,155.7 354.8,156.7 353.0,160.1 354.6,164.7 350.0,166.5 347.0,165.0 344.9,163.0 345.5,159.6 346.3,157.5 344.9,155.1 342.9,153.0 341.9,150.8ZM61.2,139.7 64.4,138.3 67.4,135.9 69.4,133.5 72.4,133.8 75.9,137.4 76.5,140.3 73.5,140.3 70.4,140.3 64.4,140.0ZM69.8,153.8 71.4,153.8 73.1,150.2 72.9,146.1 75.5,142.4 72.4,142.1 70.4,143.8 69.4,148.9ZM76.3,142.4 80.5,143.2 85.1,144.6 82.1,147.5 80.5,150.2 78.5,148.0 78.9,144.4ZM78.7,153.8 83.5,153.5 87.5,150.8 84.5,151.3 80.5,153.0ZM85.9,149.4 93.2,148.9 92.6,146.9 87.5,147.7ZM51.3,128.2 52.9,125.0 50.3,117.4 48.3,118.4 50.3,125.0Z" fill="#f5f8fb"/>
  <defs>
    <g id="mr"><circle r="11.3" fill="#f43f5e" opacity=".16"/><circle r="8.5" fill="#f43f5e" opacity=".12"/><circle r="5.6" fill="#fb7185" opacity=".35"/><circle r="2.7" fill="#e11d48"/></g>
    <g id="mrs"><circle r="5" fill="#f43f5e" opacity=".2"/><circle r="2.2" fill="#e11d48"/></g>
    <g id="mo"><circle r="9.2" fill="#fb923c" opacity=".16"/><circle r="6.5" fill="#fdba74" opacity=".3"/><circle r="4.2" fill="#fb923c" opacity=".3"/><circle r="2.4" fill="#ea580c"/></g>
    <g id="my"><circle r="9.5" fill="#f59e0b" opacity=".14"/><circle r="6.5" fill="#fcd34d" opacity=".3"/><circle r="4.2" fill="#fbbf24" opacity=".35"/><circle r="2.5" fill="#f59e0b"/></g>
  </defs>
  <g>
    <use href="#mr" transform="translate(91.5 168.7) scale(1.00)"/>
    <use href="#mr" transform="translate(265.7 120.4) scale(1.00)"/>
    <use href="#mr" transform="translate(480.0 183.1) scale(1.05)"/>
    <use href="#mr" transform="translate(529.9 168.9) scale(1.00)"/>
    <use href="#mrs" transform="translate(532.2 158.2) scale(0.80)"/>
    <use href="#mrs" transform="translate(519.8 175.4) scale(1.00)"/>
    <use href="#my" transform="translate(16.3 172.9) scale(1.00)"/>
    <use href="#my" transform="translate(58.7 187.3) scale(1.00)"/>
    <use href="#my" transform="translate(244.3 144.3) scale(1.00)"/>
    <use href="#my" transform="translate(287.1 129.9) scale(1.00)"/>
    <use href="#mo" transform="translate(505.0 163.0) scale(1.00)"/>
    <use href="#mo" transform="translate(490.6 200.5) scale(1.00)"/>
    <use href="#mo" transform="translate(448.0 217.0) scale(1.00)"/>
    <use href="#my" transform="translate(455.7 241.9) scale(0.90)"/>
    <use href="#my" transform="translate(550.4 322.5) scale(0.85)"/>
    <circle cx="480.8" cy="197.6" r="1.4" fill="#166534"/>
  </g>
</svg>
<!-- zoom control -->
<div class="a" style="left:1693px;top:711px;width:113px;height:27px;border:1.5px solid #cbd5e1;border-radius:4px;background:#fff;box-shadow:0 1px 2px rgba(15,23,42,.12)">
  <div class="a" style="left:23px;top:0;width:1.5px;height:100%;background:#dbe1e8"></div>
  <div class="a" style="left:87px;top:0;width:1.5px;height:100%;background:#dbe1e8"></div>
  <svg class="a" style="left:5px;top:6px" width="13" height="13" viewBox="0 0 13 13" stroke="#7b8aa0" stroke-width="1.3"><path d="M1 6.5h11M6.5 1v11"/></svg>
  <div class="a" style="left:24px;top:0;width:63px;text-align:center;font-size:13px;line-height:25px;color:#111">15%</div>
  <svg class="a" style="left:93px;top:6px" width="13" height="13" viewBox="0 0 13 13" stroke="#7b8aa0" stroke-width="1.3"><path d="M1 6.5h11"/></svg>
</div>

<!-- loss card -->
<div class="card" style="left:1219px;top:800px;width:628px;height:400px">
  <div class="a b" style="left:29px;top:27px;font-size:25.5px;line-height:38px;font-weight:bold;color:#18181b">予想損失額</div>
  <div class="btn" style="left:533px;top:22px;width:67px;height:45px">詳細</div>
  <div class="lrow" style="top:82px;height:44px"><div class="l" style="top:2px;font-size:24px;font-weight:bold;line-height:34px;color:#18181b">合計</div><div class="r" style="top:0;font-size:29px;line-height:36px">$65,000,000</div></div>
  <div class="lrow" style="top:126px;height:48.6px"><div class="l" style="top:8px;line-height:34px">Tier 1</div><div class="r" style="top:7px;line-height:34px">$40,000,000</div></div>
  <div class="lrow" style="top:174.6px;height:48.6px"><div class="l" style="top:8px;line-height:34px">Tier 2</div><div class="r" style="top:7px;line-height:34px">$20,000,000</div></div>
  <div class="lrow" style="top:223.2px;height:48.6px"><div class="l" style="top:8px;line-height:34px">Tier 3</div><div class="r" style="top:7px;line-height:34px">$5,000,000</div></div>
  <div class="lrow" style="top:271.8px;height:48.6px;border-bottom:0"><div class="l" style="top:8px;line-height:34px">Tier 4</div><div class="r" style="top:7px;line-height:34px">$5,000,000</div></div>
</div>
</body>
</html>
